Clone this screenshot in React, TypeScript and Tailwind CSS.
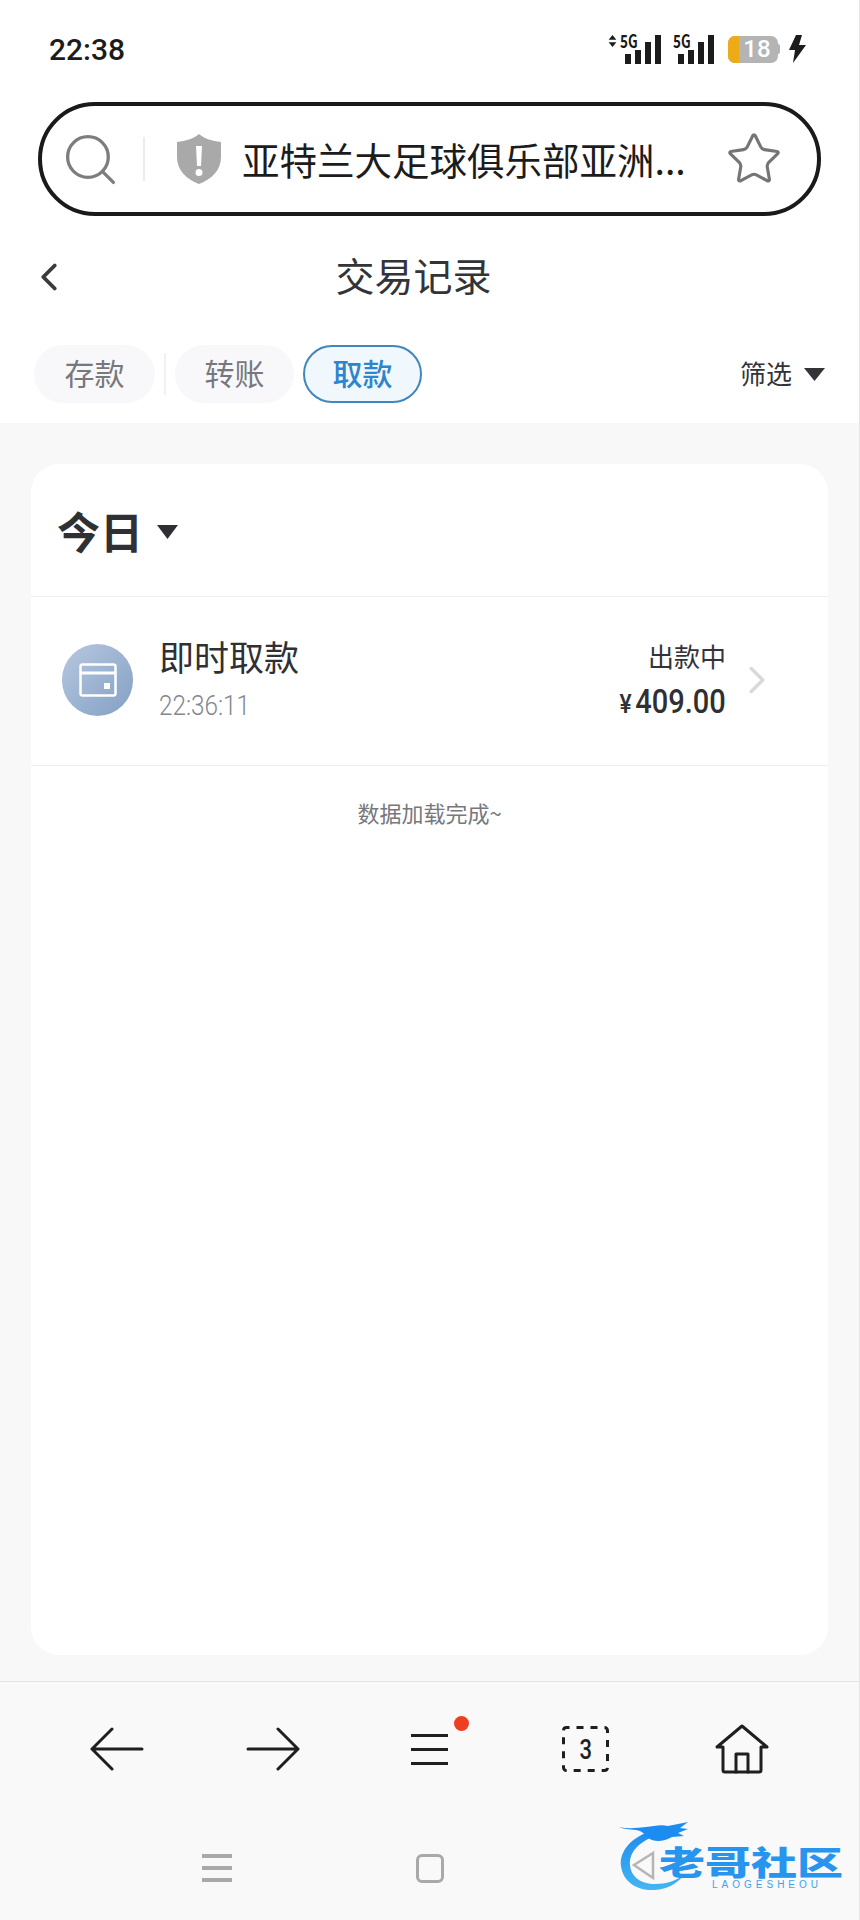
import { ChevronLeft, ChevronRight, Search, Star } from "lucide-react";

function Signal({ arrows }: { arrows?: boolean }) {
  return (
    <div className="relative flex h-[30px] w-[54px] items-end justify-end">
      {arrows && (
        <svg className="absolute left-0 top-[1px]" width="9" height="12" viewBox="0 0 10 14" fill="#1c1c1c">
          <path d="M5 0 9.5 5.5H.5zM5 14 .5 8.5h9z" />
        </svg>
      )}
      <span className="absolute left-[12px] top-[-3px] origin-left scale-x-75 text-[18px] leading-[18px] font-bold text-[#1a1a1a]">5G</span>
      <svg width="37" height="30" viewBox="0 0 37 30" fill="#1c1c1c">
        <rect x="0" y="20" width="6" height="10" />
        <rect x="10" y="16" width="6" height="14" />
        <rect x="20" y="8" width="6" height="22" />
        <rect x="30" y="1" width="6" height="29" />
      </svg>
    </div>
  );
}

function TabPill({ label, active, wide }: { label: string; active?: boolean; wide?: boolean }) {
  if (active) {
    return (
      <div className="flex h-[58px] w-[119px] items-center justify-center rounded-full border-2 border-[#3f87bd] bg-[#f1f8fd] pb-[4px] text-[30px] font-medium text-[#2f85cb]">
        {label}
      </div>
    );
  }
  return (
    <div className={`flex h-[58px] items-center justify-center rounded-full bg-[#f8f8fa] pb-[4px] text-[30px] text-[#77787d] ${wide ? "w-[121px]" : "w-[119px]"}`}>
      {label}
    </div>
  );
}

function Watermark() {
  return (
    <div className="absolute bottom-[28px] right-[14px] h-[74px] w-[228px]">
      <svg className="absolute left-0 top-0" width="100" height="74" viewBox="0 0 100 74" fill="none">
        <defs>
          <linearGradient id="dragon" x1="0" y1="0" x2="0" y2="1">
            <stop offset="0" stopColor="#1c8cf0" />
            <stop offset="1" stopColor="#45b5f2" />
          </linearGradient>
        </defs>
        <path d="M38 12C14 18 2 34 4 48c2 16 16 25 34 24 12-1 22-6 30-16-9 7-19 10-30 10-14 0-24-7-25-19-1-13 9-24 30-31z" fill="url(#dragon)" />
        <path d="M2 9c9 2 18 1 27 0 8-1 15-3 22-1l20-4-8 6 8 1-10 4 6 3-12 1c-9 5-18 5-24 1-3-4-6-7-12-8C12 11 6 11 2 9z" fill="#1c8cf0" />
        <path d="M36 35 17 47l19 13z" fill="#f9f9fa" stroke="#b5b5b5" strokeWidth="2.5" />
      </svg>
      <span className="absolute left-[42px] top-[25px] scale-y-[.72] whitespace-nowrap text-[46px] leading-[36px] font-black text-[#2795ee]">
        老哥社区
      </span>
      <span className="absolute left-[95px] top-[62px] font-['Liberation_Sans',sans-serif] text-[10px] leading-[10px] tracking-[4px] text-[#3ba3ee]">
        LAOGESHEOU
      </span>
    </div>
  );
}

export default function App() {
  return (
    <div className="relative flex h-[1920px] w-[860px] flex-col overflow-hidden border-r border-[#e4e4e4] bg-white font-['Noto_Sans_CJK_SC','Noto_Sans',sans-serif]">
      {/* status bar */}
      <div className="flex h-[102px] items-center justify-between pb-[4px] pl-[49px] pr-[53px]">
        <span className="font-['Roboto',sans-serif] text-[30px] font-medium text-[#1c1c1c]">22:38</span>
        <div className="flex items-center">
          <Signal arrows />
          <div className="ml-[-1px]"><Signal /></div>
          <div className="relative ml-[13px] flex h-[27px] w-[50px] items-center justify-center overflow-hidden rounded-[7px] bg-[#b4b4b4] pl-[8px]">
            <div className="absolute inset-y-0 left-0 w-[11px] bg-[#eeaa17]" />
            <span className="relative font-['Roboto',sans-serif] text-[24px] leading-none font-medium text-white">18</span>
          </div>
          <div className="h-[10px] w-[2px] rounded-r-sm bg-[#b4b4b4]" />
          <svg className="ml-[9px]" width="17" height="28" viewBox="0 0 17 28" fill="#1c1c1c">
            <path d="M7 0 0 15h6L4 28 17 10h-7l3-10z" />
          </svg>
        </div>
      </div>

      {/* address bar */}
      <div className="mx-[38px] flex h-[114px] items-center rounded-full border-[4px] border-[#1a1a1a] pl-[18px]">
        <Search size={61} strokeWidth={1.3} className="shrink-0 text-[#7d7d7d]" />
        <div className="ml-[22px] h-[44px] w-[2px] bg-[#ececec]" />
        <svg className="ml-[31px] shrink-0" width="46" height="50" viewBox="0 0 46 50">
          <path d="M23 0c6 5 13 7 22 8v15c0 13-9 22-22 27C10 45 1 36 1 23V8c9-1 16-3 22-8z" fill="#a9a9a9" />
          <path d="M20 12h6l-1 20h-4zM23 35a3.5 3.5 0 1 1 0 7 3.5 3.5 0 0 1 0-7z" fill="#fff" />
        </svg>
        <span className="ml-[20px] w-[448px] whitespace-nowrap text-[37.5px] leading-none text-[#1c1c1c]">亚特兰大足球俱乐部亚洲...</span>
        <Star size={58} strokeWidth={1.3} className="ml-[35px] shrink-0 text-[#757575]" />
      </div>

      {/* title */}
      <div className="relative flex h-[122px] items-center justify-center pb-[6px] pr-[32px] text-[39px] text-[#333438]">
        <ChevronLeft size={46} strokeWidth={2} className="absolute left-[26px] top-[38px] text-[#3a3b3f]" />
        交易记录
      </div>

      {/* tabs */}
      <div className="mt-[7px] flex items-center pb-[20px] pl-[34px] pr-[34px]">
        <TabPill label="存款" wide />
        <div className="mx-[9px] h-[42px] w-[2px] bg-[#f1f1f3]" />
        <TabPill label="转账" />
        <div className="ml-[9px]"><TabPill label="取款" active /></div>
        <div className="ml-auto flex items-center pb-[4px] text-[26px] text-[#333438]">
          筛选
          <svg className="ml-[12px] mt-[5px]" width="21" height="13" viewBox="0 0 21 13" fill="#333438">
            <path d="M0 0h21L10.5 13z" />
          </svg>
        </div>
      </div>

      {/* list */}
      <div className="flex min-h-0 flex-1 flex-col bg-[#f8f8f9] px-[31px] pb-[26px] pt-[41px]">
        <div className="flex flex-1 flex-col rounded-[28px] bg-white">
          <div className="flex h-[133px] items-center border-b border-[#efefef] pl-[26px]">
            <span className="text-[43px] font-bold text-[#2f3034]">今日</span>
            <svg className="ml-[14px] mt-[4px]" width="21" height="14" viewBox="0 0 21 14" fill="#2f3034">
              <path d="M0 0h21L10.5 14z" />
            </svg>
          </div>

          <div className="flex h-[169px] items-center border-b border-[#efefef] pb-[2px] pl-[31px]">
            <div className="flex h-[72px] w-[71px] shrink-0 items-center justify-center rounded-full bg-gradient-to-br from-[#b7c8e0] to-[#84a0c3]">
              <svg width="38" height="34" viewBox="0 0 38 34" fill="none" stroke="#fff" strokeWidth="2.5">
                <rect x="1.5" y="1.5" width="35" height="31" rx="2" />
                <path d="M1.5 10h35" strokeWidth="3" />
                <rect x="25" y="20" width="6" height="6" fill="#fff" stroke="none" />
              </svg>
            </div>
            <div className="ml-[26px] flex flex-col">
              <span className="mt-[-6px] text-[35px] leading-[44px] text-[#2f3034]">即时取款</span>
              <span className="mt-[13px] origin-left scale-x-90 font-['Roboto',sans-serif] text-[27px] leading-[30px] font-light text-[#85868b]">22:36:11</span>
            </div>
            <div className="ml-auto flex flex-col items-end">
              <span className="text-[26px] leading-[34px] text-[#333438]">出款中</span>
              <span className="mt-[11px] origin-right scale-x-[.88] font-['Roboto',sans-serif] text-[33px] leading-[36px] font-medium text-[#2f3034]">
                <span className="mr-[4px] text-[26px]">¥</span>409.00
              </span>
            </div>
            <ChevronRight size={46} strokeWidth={1.8} className="ml-[8px] mr-[48px] shrink-0 text-[#d9d9d9]" />
          </div>

          <div className="mt-[30px] text-center text-[22px] text-[#77787d]">数据加载完成~</div>
        </div>
      </div>

      {/* browser toolbar */}
      <div className="border-t border-[#e3e3e3] bg-[#f9f9fa]">
        <div className="grid h-[134px] grid-cols-5 items-center px-[39px]">
          <svg className="justify-self-center" width="54" height="44" viewBox="0 0 54 44" fill="none" stroke="#1f1f1f" strokeWidth="3" strokeLinecap="round" strokeLinejoin="round">
            <path d="M52 22H2M22 2 2 22l20 20" />
          </svg>
          <svg className="justify-self-center" width="54" height="44" viewBox="0 0 54 44" fill="none" stroke="#1f1f1f" strokeWidth="3" strokeLinecap="round" strokeLinejoin="round">
            <path d="M2 22h50M32 2l20 20-20 20" />
          </svg>
          <div className="relative flex flex-col gap-[11px] justify-self-center">
            <div className="h-[3px] w-[37px] bg-[#1f1f1f]" />
            <div className="h-[3px] w-[37px] bg-[#1f1f1f]" />
            <div className="h-[3px] w-[37px] bg-[#1f1f1f]" />
            <div className="absolute left-[43px] top-[-18px] h-[15px] w-[15px] rounded-full bg-[#ee3f22]" />
          </div>
          <div className="relative flex h-[46px] w-[47px] items-center justify-center justify-self-center">
            <svg className="absolute inset-0" width="47" height="46" viewBox="0 0 47 46" fill="none">
              <rect x="1.5" y="1.5" width="44" height="43" rx="3" stroke="#1f1f1f" strokeWidth="3" strokeDasharray="7 7" strokeDashoffset="-10" />
            </svg>
            <span className="origin-center scale-y-125 font-['Roboto',sans-serif] text-[22px] font-medium text-[#1f1f1f]">3</span>
          </div>
          <svg className="justify-self-center" width="54" height="50" viewBox="0 0 54 50" fill="none" stroke="#1f1f1f" strokeWidth="3" strokeLinecap="round" strokeLinejoin="round">
            <path d="M2 23 27 2l25 21h-6v23a2 2 0 0 1-2 2H10a2 2 0 0 1-2-2V23z" />
            <path d="M21 48V30h12v18" />
          </svg>
        </div>

        {/* system nav */}
        <div className="relative grid h-[104px] grid-cols-3 items-center px-[110px]">
          <div className="flex flex-col gap-[8px] justify-self-center">
            <div className="h-[4px] w-[30px] bg-[#a9a9a9]" />
            <div className="h-[4px] w-[30px] bg-[#a9a9a9]" />
            <div className="h-[4px] w-[30px] bg-[#a9a9a9]" />
          </div>
          <div className="h-[29px] w-[28px] justify-self-center rounded-[6px] border-[3px] border-[#a9a9a9]" />
          <div />
          <Watermark />
        </div>
      </div>
    </div>
  );
}
